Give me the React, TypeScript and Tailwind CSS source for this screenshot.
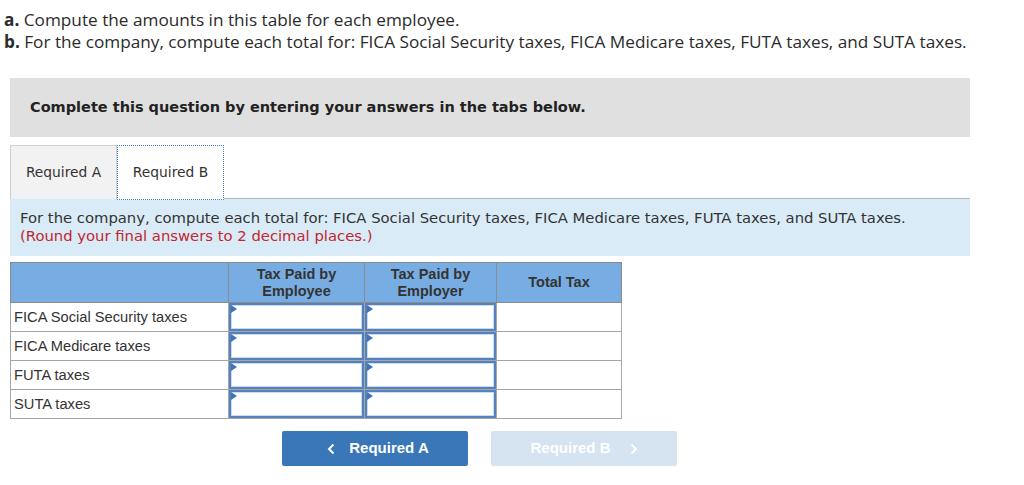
import React from "react";

const rows = [
	"FICA Social Security taxes",
	"FICA Medicare taxes",
	"FUTA taxes",
	"SUTA taxes",
];

// answer cell with the little blue flag in its corner
function AnswerCell() {
	return (
		<td className="border border-[#a6a6a6] p-0 h-[28px]">
			<div className="relative h-[28px] border-2 border-[#5582bd] bg-white shadow-[inset_0_0_0_1px_#c9dcf0]">
				<span className="absolute left-0 top-0 w-0 h-0 border-y-[4px] border-y-transparent border-l-[6px] border-l-[#3f74b8]" />
				<input type="text" className="w-full h-full outline-none bg-transparent" />
			</div>
		</td>
	);
}

export default function App() {
	return (
		<div className="w-[1024px] h-[485px] bg-white text-[#2d2d2d] overflow-hidden">
			{/* question text */}
			<div className="pt-[9px] pl-[4px] text-[17.2px] leading-[22px] font-['Open_Sans',sans-serif] text-[#2b2b2b]">
				<p>
					<b>a.</b> Compute the amounts in this table for each employee.
				</p>
				<p>
					<b>b.</b> For the company, compute each total for: FICA Social Security taxes, FICA Medicare taxes, FUTA taxes, and SUTA taxes.
				</p>
			</div>

			<div className="ml-[10px] w-[960px] font-['DejaVu_Sans',sans-serif]">
				<div className="mt-[25px] h-[59px] bg-[#e0e0e0] flex items-center pl-[20px]">
					<span className="text-[14.5px] font-bold text-[#222]">
						Complete this question by entering your answers in the tabs below.
					</span>
				</div>

				{/* tabs */}
				<div className="mt-[8px] flex h-[54px] border-b border-[#b5b5b5]">
					<button className="w-[107px] h-[54px] bg-[#f2f2f2] border border-b-0 border-[#cfcfcf] text-[13.8px] text-[#333]">
						Required A
					</button>
					<button className="w-[107px] h-[55px] bg-white border border-dotted border-[#3f7fc9] text-[13.8px] text-[#333] relative z-10">
						Required B
					</button>
				</div>

				<div className="h-[57px] bg-[#daebf8] pl-[10px] pt-[10px] text-[14.8px] leading-[18px]">
					<p className="text-[#333]">
						For the company, compute each total for: FICA Social Security taxes, FICA Medicare taxes, FUTA taxes, and SUTA taxes.
					</p>
					<p className="text-[#c1272d]">(Round your final answers to 2 decimal places.)</p>
				</div>

				{/* table */}
				<table className="mt-[6px] border-collapse font-['Liberation_Sans',sans-serif] text-[14.7px]">
					<thead>
						<tr className="bg-[#78ade3] h-[40px]">
							<th className="w-[218px] border border-[#8c8c8c]" />
							<th className="w-[136px] border border-[#8c8c8c] font-bold text-[14.5px] leading-[17px] text-[#333]">
								Tax Paid by
								<br />
								Employee
							</th>
							<th className="w-[132px] border border-[#8c8c8c] font-bold text-[14.5px] leading-[17px] text-[#333]">
								Tax Paid by
								<br />
								Employer
							</th>
							<th className="w-[125px] border border-[#8c8c8c] font-bold text-[14.5px] text-[#333]">Total Tax</th>
						</tr>
					</thead>
					<tbody>
						{rows.map((r) => (
							<tr key={r}>
								<td className="border border-[#a6a6a6] pl-[3px] text-[#333] h-[28px] pt-[1px]">{r}</td>
								<AnswerCell />
								<AnswerCell />
								<td className="border border-[#a6a6a6]" />
							</tr>
						))}
					</tbody>
				</table>

				{/* nav buttons */}
				<div className="mt-[12px] ml-[272px] flex gap-[23px] font-['Liberation_Sans',sans-serif] text-[15px] font-bold text-white">
					<button className="w-[186px] h-[35px] rounded-[2px] bg-[#3a77b9] flex items-center justify-center gap-[13px] pl-[6px]">
						<svg width="9" height="12" viewBox="0 0 9 12" fill="none">
							<path d="M6.5 1.5 2 6l4.5 4.5" stroke="white" strokeWidth="2" />
						</svg>
						<span>Required A</span>
					</button>
					<button className="w-[186px] h-[35px] rounded-[2px] bg-[#d6e3f1] flex items-center justify-center gap-[18px]">
						<span>Required B</span>
						<svg width="9" height="12" viewBox="0 0 9 12" fill="none">
							<path d="M2.5 1.5 7 6l-4.5 4.5" stroke="white" strokeWidth="2" />
						</svg>
					</button>
				</div>
			</div>
		</div>
	);
}
